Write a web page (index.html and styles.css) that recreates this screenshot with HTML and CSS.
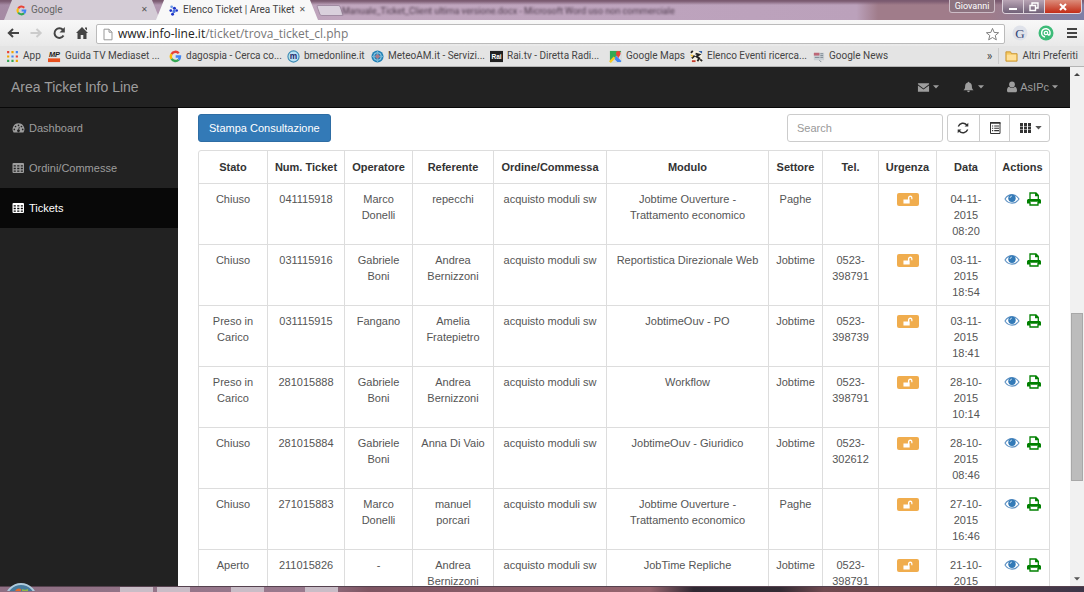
FILE: index.html
```
<!DOCTYPE html>
<html lang="it">
<head>
<meta charset="utf-8">
<title>Elenco Ticket | Area Tiket</title>
<link rel="stylesheet" href="styles.css">
</head>
<body>
<svg class="sprite" aria-hidden="true">
  <symbol id="google" viewBox="0 0 16 16"><g fill="none" stroke-width="3"><path d="M3.2 5A5.5 5.5 0 0 1 12 4" stroke="#e94235"/><path d="M3.2 11A5.5 5.5 0 0 1 3.2 5" stroke="#fbbc05"/><path d="M11.8 12A5.5 5.5 0 0 1 3.2 11" stroke="#34a853"/><path d="M8.2 8H13.5A5.5 5.5 0 0 1 11.8 12" stroke="#4285f4"/></g></symbol>
  <symbol id="caret" viewBox="0 0 8 5"><path d="M0 0h8L4 4.5z" fill="currentColor"/></symbol>
  <symbol id="table" viewBox="0 0 13 12"><path fill="currentColor" fill-rule="evenodd" d="M1.500 1h9.500a1 1 0 0 1 1 1v8a1 1 0 0 1-1 1h-9.500a1 1 0 0 1-1-1V2a1 1 0 0 1 1-1zM1.700 3.200v1.400h2.100V3.200zM5.200 3.200v1.400h2.200V3.200zM8.800 3.200v1.400h2.100V3.200zM1.700 5.800v1.400h2.100V5.800zM5.200 5.800v1.400h2.200V5.800zM8.800 5.800v1.400h2.100V5.800zM1.700 8.400v1.400h2.100V8.400zM5.200 8.400v1.400h2.200V8.400zM8.800 8.400v1.400h2.100V8.400z"/></symbol>
  <symbol id="gauge" viewBox="0 0 14 12"><path fill="currentColor" fill-rule="evenodd" d="M7 1a6.3 6.3 0 0 0-5.3 9.8h10.6A6.3 6.3 0 0 0 7 1zM7 2.2a.9.9 0 1 1 0 1.8.9.9 0 0 1 0-1.8zM3.8 3.5a.9.9 0 1 1 0 1.8.9.9 0 0 1 0-1.8zM10.2 3.5a.9.9 0 1 1 0 1.8.9.9 0 0 1 0-1.8zM2.5 6.6a.9.9 0 1 1 0 1.8.9.9 0 0 1 0-1.8zM11.5 6.6a.9.9 0 1 1 0 1.8.9.9 0 0 1 0-1.8zM7.5 4.6l.8.2-.6 2.9a1.4 1.4 0 1 1-.9-.2z"/></symbol>
  <symbol id="unlock" viewBox="0 0 12 10"><path fill="#fff" d="M1.500 5h5V3.400C6.500 1.600 7.700.6 9.100.6s2.400 1 2.400 2.500v1.700h-1.300V3.300c0-.7-.4-1.200-1.100-1.200s-1.100.5-1.100 1.300V5h.4v4.500H1.500z"/></symbol>
  <symbol id="eye" viewBox="0 0 16 14"><path d="M1 7C4.500 1.200 11.500 1.200 15 7 11.500 12.500 4.500 12.500 1 7z" fill="#fff" stroke="#5b8fc2" stroke-width="1.100"/><circle cx="8" cy="6.300" r="3.700" fill="#337ab7"/><path d="M6 6A2.200 2.200 0 0 1 8 4" fill="none" stroke="#dbe8f4" stroke-width=".8"/></symbol>
  <symbol id="print" viewBox="0 0 16 14"><path d="M4 7.500V1h6l2.300 2.300v4.200M9.700 1.200v2.400h2.500" fill="none" stroke="#008000" stroke-width="1.300"/><path d="M2.700 7h10.600c1 0 1.700.7 1.700 1.600v3h-3V9.700H4v1.900H1v-3C1 7.700 1.700 7 2.700 7z" fill="#008000"/><path d="M4 10v3h8v-3" fill="none" stroke="#008000" stroke-width="1.300"/></symbol>
</svg>

<header class="browser">
  <div class="titlebar">
    <div class="tabs">
      <div class="tab tab-idle"><svg class="fav"><use href="#google"/></svg><span>Google</span><button class="tab-close" aria-label="Chiudi Google">✕</button></div>
      <div class="tab tab-active"><svg class="fav" viewBox="0 0 12 12"><g fill="#1d35c8"><circle cx="4" cy="2" r="1.500" fill="#6d9ae8"/><circle cx="7" cy="3.500" r="1.700"/><circle cx="3" cy="6" r="1.500"/><circle cx="6.500" cy="7" r="1.700" fill="#4c78e0"/><circle cx="9.500" cy="6" r="1.400"/><circle cx="5" cy="10" r="1.600"/></g></svg><span>Elenco Ticket | Area Tiket</span><button class="tab-close" aria-label="Chiudi Elenco Ticket">✕</button></div>
      <button class="new-tab" aria-label="Nuova scheda"></button>
    </div>
    <div class="behind">Manuale_Ticket_Client ultima versione.docx - Microsoft Word uso non commerciale</div>
    <div class="window-controls">
      <button class="profile">Giovanni</button>
      <div class="window-buttons">
        <button aria-label="Riduci"><svg viewBox="0 0 12 10"><path d="M2 6h8v2H2z" fill="#fff"/></svg></button>
        <button aria-label="Ripristina"><svg viewBox="0 0 12 10"><path d="M4 3V1h6v5H8M2 3.500h5.500v5H2z" fill="none" stroke="#fff" stroke-width="1.400"/></svg></button>
        <button class="window-close" aria-label="Chiudi"><svg viewBox="0 0 12 10"><path d="M3 2l6 6M9 2L3 8" stroke="#fff" stroke-width="2"/></svg></button>
      </div>
    </div>
  </div>
  <div class="toolbar">
    <div class="nav">
      <button aria-label="Indietro"><svg viewBox="0 0 14 14"><path d="M13 7H2.500M7 3L2.800 7 7 11" fill="none" stroke="#444" stroke-width="2"/></svg></button>
      <button aria-label="Avanti"><svg viewBox="0 0 14 14"><path d="M1.500 7H12M7.500 3l4.200 4-4.200 4" fill="none" stroke="#ccc" stroke-width="2"/></svg></button>
      <button aria-label="Ricarica"><svg viewBox="0 0 14 14"><path d="M11.500 9.500A4.800 4.800 0 1 1 11 4" fill="none" stroke="#444" stroke-width="2"/><path d="M12.800 1v5.500H7.500z" fill="#444"/></svg></button>
      <button aria-label="Pagina iniziale"><svg viewBox="0 0 14 14"><path d="M7 1l6 6h-1.500v6H8.300V9H5.700v4H2.500V7H1l6-6zM10 1.500h2v3l-2-2z" fill="#444"/></svg></button>
    </div>
    <div class="address">
      <svg viewBox="0 0 10 12"><path d="M1 .7h5l3 3v7.600H1zM6 .7v3h3" fill="#fff" stroke="#999"/></svg>
      <div class="url">www.info-line.it<span>/ticket/trova_ticket_cl.php</span></div>
      <button aria-label="Preferiti"><svg viewBox="0 0 16 16"><path d="M8 1.500l1.800 4.300 4.700.3-3.600 3 1.200 4.600L8 11.200l-4.100 2.500 1.200-4.600-3.600-3 4.700-.3z" fill="#fff" stroke="#777"/></svg></button>
    </div>
    <div class="extensions">
      <button aria-label="Estensione G"><svg viewBox="0 0 16 16"><circle cx="8" cy="8" r="7.500" fill="#dfe2ea"/><text class="ext-letter" x="8" y="12.500">G</text></svg></button>
      <button aria-label="Estensione verde"><svg viewBox="0 0 16 16"><circle cx="8" cy="8" r="7.500" fill="#3dbb78"/><path d="M7 12A4.200 4.200 0 1 1 12 8.500c0 2-2 2-2 .5" fill="none" stroke="#fff" stroke-width="1.500"/><circle cx="8" cy="8" r="1.700" fill="none" stroke="#fff" stroke-width="1.300"/></svg></button>
      <button aria-label="Menu"><svg viewBox="0 0 16 16"><path d="M3 4h10M3 8h10M3 12h10" stroke="#444" stroke-width="2"/></svg></button>
    </div>
  </div>
  <nav class="bookmarks" aria-label="Preferiti">
    <a href="#"><svg viewBox="0 0 12 12"><path d="M1 1h2v2H1zM9 5h2v2H9z" fill="#e94235"/><path d="M5 1h2v2H5zM1 5h2v2H1zM9 9h2v2H9z" fill="#f0a500"/><path d="M9 1h2v2H9zM5 5h2v2H5z" fill="#4285f4"/><path d="M1 9h2v2H1zM5 9h2v2H5z" fill="#34a853"/></svg>App</a>
    <a href="#"><svg viewBox="0 0 14 14"><text class="mp-text" x="7" y="8">MP</text><path d="M0 9h13v4H0z" fill="#e8501e"/></svg>Guida TV Mediaset ...</a>
    <a href="#"><svg><use href="#google"/></svg>dagospia - Cerca co...</a>
    <a href="#"><svg viewBox="0 0 14 14"><circle cx="7" cy="7" r="6" fill="#b9e1f5" stroke="#3b8ab3" stroke-width="1.200"/><text class="m-text" x="7" y="10">m</text></svg>bmedonline.it</a>
    <a href="#"><svg viewBox="0 0 14 14"><circle cx="7" cy="7" r="6.500" fill="#2583b7"/><circle cx="7" cy="7" r="4.200" fill="none" stroke="#a8d7ed"/><path d="M1 7h12M7 1v12" stroke="#75b5d4"/><circle cx="7" cy="7" r="2.300" fill="#a77988"/></svg>MeteoAM.it - Servizi...</a>
    <a href="#"><svg viewBox="0 0 14 14"><path d="M0 1h14v12H0z" fill="#222"/><text class="rai-text" x="7" y="10">Rai</text></svg>Rai.tv - Diretta Radi...</a>
    <a href="#"><svg viewBox="0 0 14 14"><path d="M1 1h12v12H1z" fill="#34a853"/><path d="M1 13L13 2v11z" fill="#d8dce4"/><path d="M5 9l3-2.500 5 5V13H9z" fill="#4285f4"/><path d="M1 13l5-5" stroke="#fbcb20" stroke-width="2.500"/><path d="M10 9C9 6.500 7.500 5.500 7.500 3.500a2.500 2.500 0 0 1 5 0C12.500 5.500 11 6.500 10 9z" fill="#e94235"/></svg>Google Maps</a>
    <a href="#"><svg viewBox="0 0 14 14"><path d="M1 1h12v12H1z" fill="#f8f3e5"/><path d="M1 3l2-2M6 4l4 1-3 2 3 2-2 3M11 10l2 2M2 9l3-3" fill="none" stroke="#252525" stroke-width="2"/><path d="M9 1h4v3z" fill="#3865a8"/><path d="M0 5h3v3z" fill="#f0bb23"/><path d="M2 11h4v2H2z" fill="#c33c2c"/></svg>Elenco Eventi ricerca...</a>
    <a href="#"><svg viewBox="0 0 14 14"><path d="M2 3h11v8H2z" fill="#c9d0d5"/><path d="M2 3h6v3H2z" fill="#bd6777"/><path d="M9 4h3M9 6h3M3 8h5M9 8h3M8 11l2 2" stroke="#7c8791"/></svg>Google News</a>
    <button class="more" aria-label="Altri segnalibri">»</button>
    <a class="other" href="#"><svg viewBox="0 0 14 14"><path d="M1 2h5l1 2h6v8H1z" fill="#f6c95f" stroke="#c99330"/><path d="M2 5h10v6H2z" fill="#ffe09a"/></svg>Altri Preferiti</a>
  </nav>
</header>

<div class="viewport">
  <div class="app">
    <header class="app-header">
      <a class="brand" href="#">Area Ticket Info Line</a>
      <div class="user-menu">
        <button aria-label="Messaggi"><svg class="icon" viewBox="0 0 14 12"><path d="M1 2h12v1L7 7.500 1 3zM1 4.300l6 4.500 6-4.500V11H1z" fill="currentColor"/></svg><svg class="caret"><use href="#caret"/></svg></button>
        <button aria-label="Notifiche"><svg class="icon" viewBox="0 0 14 14"><path d="M7 .8c.6 0 .9.400.8.900 2 .4 3.100 2 3.100 3.800 0 3 .7 4.400 2 5.300H1.100c1.300-.9 2-2.300 2-5.300 0-1.800 1.100-3.400 3.100-3.800C6.100 1.200 6.400.8 7 .8zM5.400 11.400h3.200a1.600 1.600 0 0 1-3.200 0z" fill="currentColor"/></svg><svg class="caret"><use href="#caret"/></svg></button>
        <button><svg class="icon icon-user" viewBox="0 0 10 12"><circle cx="5" cy="3.500" r="2.900" fill="currentColor"/><path d="M2 5.800c2 1.600 4 1.600 6 0 1.500.5 2 2 2 4 0 .9-.6 1.500-1.500 1.500h-7C.6 11.300 0 10.700 0 9.800c0-2 .5-3.500 2-4z" fill="currentColor"/></svg>AsIPc<svg class="caret"><use href="#caret"/></svg></button>
      </div>
    </header>
    <div class="app-body">
      <nav class="sidebar">
        <a href="#"><svg><use href="#gauge"/></svg>Dashboard</a>
        <a href="#"><svg><use href="#table"/></svg>Ordini/Commesse</a>
        <a class="current" href="#"><svg><use href="#table"/></svg>Tickets</a>
      </nav>
      <main class="content">
        <div class="actions-bar">
          <button class="primary">Stampa Consultazione</button>
          <div class="tools">
            <input class="search" type="text" placeholder="Search" aria-label="Search">
            <div class="group">
              <button aria-label="Aggiorna"><svg viewBox="0 0 14 14"><path d="M2.300 5.500A5 5 0 0 1 10.800 4M11.700 8.500A5 5 0 0 1 3.200 10" fill="none" stroke="#333" stroke-width="1.400"/><path d="M12.300 1.800v3.700H8.600zM1.700 12.200V8.500h3.700z" fill="#333"/></svg></button>
              <button aria-label="Vista elenco"><svg viewBox="0 0 14 14"><path d="M2.500 1.500h9.500v11H2.500z" fill="none" stroke="#333"/><path d="M2 2h10.500" stroke="#333" stroke-width="1.500"/><path d="M4 5h1.200M6.200 5H11M4 7.300h1.200M6.200 7.300H11M4 9.600h1.200M6.200 9.600H11" stroke="#333" stroke-width="1.100"/></svg></button>
              <button aria-label="Colonne"><svg viewBox="0 0 14 14"><path d="M2 2h3v3H2zM6 2h3v3H6zM10 2h3v3h-3zM2 5.500h3v3H2zM6 5.500h3v3H6zM10 5.500h3v3h-3zM2 9h3v3H2zM6 9h3v3H6zM10 9h3v3h-3z" fill="#333"/></svg><svg class="caret"><use href="#caret"/></svg></button>
            </div>
          </div>
        </div>
        <table class="tickets">
          <colgroup><col class="c-state"><col class="c-num"><col class="c-oper"><col class="c-ref"><col class="c-order"><col class="c-module"><col class="c-sector"><col class="c-tel"><col class="c-urgency"><col class="c-date"><col class="c-actions"></colgroup>
          <thead><tr><th>Stato</th><th>Num. Ticket</th><th>Operatore</th><th>Referente</th><th>Ordine/Commessa</th><th>Modulo</th><th>Settore</th><th>Tel.</th><th>Urgenza</th><th>Data</th><th>Actions</th></tr></thead>
          <tbody>
            <tr><td>Chiuso</td><td>041115918</td><td>Marco Donelli</td><td>repecchi</td><td>acquisto moduli sw</td><td>Jobtime Ouverture -<br>Trattamento economico</td><td>Paghe</td><td></td><td><span class="badge"><svg><use href="#unlock"/></svg></span></td><td>04-11-<br>2015<br>08:20</td><td><div class="row-actions"><a href="#" aria-label="Vedi"><svg><use href="#eye"/></svg></a><a href="#" aria-label="Stampa"><svg><use href="#print"/></svg></a></div></td></tr>
            <tr><td>Chiuso</td><td>031115916</td><td>Gabriele Boni</td><td>Andrea Bernizzoni</td><td>acquisto moduli sw</td><td>Reportistica Direzionale Web</td><td>Jobtime</td><td>0523-<br>398791</td><td><span class="badge"><svg><use href="#unlock"/></svg></span></td><td>03-11-<br>2015<br>18:54</td><td><div class="row-actions"><a href="#" aria-label="Vedi"><svg><use href="#eye"/></svg></a><a href="#" aria-label="Stampa"><svg><use href="#print"/></svg></a></div></td></tr>
            <tr><td>Preso in Carico</td><td>031115915</td><td>Fangano</td><td>Amelia Fratepietro</td><td>acquisto moduli sw</td><td>JobtimeOuv - PO</td><td>Jobtime</td><td>0523-<br>398739</td><td><span class="badge"><svg><use href="#unlock"/></svg></span></td><td>03-11-<br>2015<br>18:41</td><td><div class="row-actions"><a href="#" aria-label="Vedi"><svg><use href="#eye"/></svg></a><a href="#" aria-label="Stampa"><svg><use href="#print"/></svg></a></div></td></tr>
            <tr><td>Preso in Carico</td><td>281015888</td><td>Gabriele Boni</td><td>Andrea Bernizzoni</td><td>acquisto moduli sw</td><td>Workflow</td><td>Jobtime</td><td>0523-<br>398791</td><td><span class="badge"><svg><use href="#unlock"/></svg></span></td><td>28-10-<br>2015<br>10:14</td><td><div class="row-actions"><a href="#" aria-label="Vedi"><svg><use href="#eye"/></svg></a><a href="#" aria-label="Stampa"><svg><use href="#print"/></svg></a></div></td></tr>
            <tr><td>Chiuso</td><td>281015884</td><td>Gabriele Boni</td><td>Anna Di Vaio</td><td>acquisto moduli sw</td><td>JobtimeOuv - Giuridico</td><td>Jobtime</td><td>0523-<br>302612</td><td><span class="badge"><svg><use href="#unlock"/></svg></span></td><td>28-10-<br>2015<br>08:46</td><td><div class="row-actions"><a href="#" aria-label="Vedi"><svg><use href="#eye"/></svg></a><a href="#" aria-label="Stampa"><svg><use href="#print"/></svg></a></div></td></tr>
            <tr><td>Chiuso</td><td>271015883</td><td>Marco Donelli</td><td>manuel porcari</td><td>acquisto moduli sw</td><td>Jobtime Ouverture -<br>Trattamento economico</td><td>Paghe</td><td></td><td><span class="badge"><svg><use href="#unlock"/></svg></span></td><td>27-10-<br>2015<br>16:46</td><td><div class="row-actions"><a href="#" aria-label="Vedi"><svg><use href="#eye"/></svg></a><a href="#" aria-label="Stampa"><svg><use href="#print"/></svg></a></div></td></tr>
            <tr><td>Aperto</td><td>211015826</td><td>-</td><td>Andrea Bernizzoni</td><td>acquisto moduli sw</td><td>JobTime Repliche</td><td>Jobtime</td><td>0523-<br>398791</td><td><span class="badge"><svg><use href="#unlock"/></svg></span></td><td>21-10-<br>2015</td><td><div class="row-actions"><a href="#" aria-label="Vedi"><svg><use href="#eye"/></svg></a><a href="#" aria-label="Stampa"><svg><use href="#print"/></svg></a></div></td></tr>
          </tbody>
        </table>
      </main>
    </div>
  </div>
  <div class="scrollbar" aria-hidden="true">
    <svg viewBox="0 0 8 5"><path d="M0 5h8L4 1z" fill="#444"/></svg>
    <div class="track"><div class="thumb"></div></div>
    <svg><use href="#caret"/></svg>
  </div>
</div>
<footer class="taskbar">
  <svg class="start" viewBox="0 0 32 8"><circle cx="16" cy="16" r="15" fill="#477b9d" stroke="#aecbdc" stroke-width="2"/><path d="M10 8c2-3 4-3 6-2v2z" fill="#e46a2d"/><path d="M17 6c2 1 4 1 6 0v2h-6z" fill="#91b847"/></svg>
  <div class="tasks"><span></span><span></span><span class="flat"></span><span></span><span class="flat"></span><span></span></div>
</footer>
</body>
</html>
```

FILE: styles.css
```
* { box-sizing: border-box; }
body {
  margin: 0;
  height: 100vh;
  display: flex;
  flex-direction: column;
  overflow: hidden;
  font-family: "Liberation Sans", Arial, sans-serif;
  font-size: 11px;
  line-height: 16px;
  color: #555;
  background: #fff;
}
button { font: inherit; color: inherit; background: none; border: 0; padding: 0; }
a { color: inherit; text-decoration: none; }
svg { display: block; flex: none; }
.sprite { position: absolute; width: 0; height: 0; }

/* Browser frame */
.browser { flex: none; font-family: Roboto, "Open Sans", sans-serif; color: #444; font-size: 10px; }
.titlebar {
  display: flex;
  height: 20px;
  background: linear-gradient(#7a5a70 0, #7a5a70 1px, transparent 5px), linear-gradient(90deg, #a58aa4, #c0a6be 32%, #bda3bd 60%, #bba1bb 79%, #a07c8a 81%, #a07c8a 91%, #7d7fa6);
}
.tabs { display: flex; padding-left: 4px; }
.tab { display: flex; align-items: center; gap: 4px; height: 20px; padding: 0 12px; clip-path: polygon(0 100%, 8px 0, calc(100% - 8px) 0, 100% 100%); }
.tab span { flex: 1; white-space: nowrap; overflow: hidden; }
.tab-idle { width: 156px; color: #666; background: #d4ccd6; }
.tab-active { width: 162px; margin-left: -4px; background: #f8f8f8; }
.fav { width: 11px; height: 11px; }
.tab-close { font-size: 8px; color: #555; }
.new-tab { width: 24px; height: 11px; margin: 5px 0 0; background: #d9d0dc; border: 1px solid #a18ca3; border-radius: 2px; transform: skewX(20deg); }
.behind { flex: 1; overflow: hidden; white-space: nowrap; font-size: 9px; line-height: 22px; color: #4d3a4c; filter: blur(1px); }
.window-controls { display: flex; align-items: flex-start; gap: 7px; padding-right: 2px; }
.profile { width: 46px; height: 13px; font-size: 9px; line-height: 11px; color: #fff; background: #8d7380; border: 1px solid #cdbcc6; border-top: 0; border-radius: 0 0 3px 3px; }
.window-buttons { display: flex; width: 80px; height: 14px; border: 1px solid #ddd3dc; border-top: 0; border-radius: 0 0 4px 4px; overflow: hidden; }
.window-buttons button { flex: 1; display: flex; justify-content: center; align-items: center; background: linear-gradient(#b9a5b5, #716178); border-right: 1px solid #ddd3dc; }
.window-buttons .window-close { flex: 0 0 36px; background: linear-gradient(#dc8d7c, #c32c16); border: 0; }
.window-buttons svg { width: 12px; height: 10px; }
.toolbar { display: flex; align-items: center; gap: 7px; height: 26px; padding: 0 4px 0 6px; background: linear-gradient(#f8f8f8, #e9e9e9); }
.nav { display: flex; gap: 9px; }
.nav svg { width: 14px; height: 14px; }
.address { flex: 1; display: flex; align-items: center; gap: 5px; height: 20px; margin-top: 2px; padding: 0 4px 0 6px; background: #fff; border: 1px solid #bbb; border-radius: 2px; }
.address > svg { width: 10px; height: 13px; }
.address button svg { width: 15px; height: 15px; }
.url { flex: 1; font-family: "Open Sans", sans-serif; font-size: 12px; color: #222; }
.url span { color: #777; }
.extensions { display: flex; gap: 10px; }
.extensions svg { width: 16px; height: 16px; }
.ext-letter { font: 13px "Liberation Serif", serif; text-anchor: middle; fill: #334477; }
.bookmarks {
  display: grid;
  grid-template-columns: 42px 121px 118px 84px 119px 119px 81px 122px 1fr auto auto;
  align-items: center;
  height: 21px;
  padding: 0 6px;
  background: #e4e4e4;
  border-bottom: 1px solid #b5b5b5;
}
.bookmarks a { display: flex; align-items: center; gap: 4px; white-space: nowrap; }
.bookmarks svg { width: 13px; height: 13px; }
.mp-text { font: italic bold 8px "Liberation Sans", sans-serif; text-anchor: middle; fill: #222; }
.m-text { font: bold 9px "Liberation Sans", sans-serif; text-anchor: middle; fill: #26286a; }
.rai-text { font: bold 7px "Liberation Sans", sans-serif; text-anchor: middle; fill: #fff; }
.more { padding-right: 6px; font-size: 12px; }
.bookmarks .other { padding-left: 6px; border-left: 1px solid #ccc; }

/* Page */
.viewport { flex: 1; min-height: 0; display: flex; }
.app { flex: 1; min-width: 0; display: flex; flex-direction: column; }
.app-header { flex: none; display: flex; align-items: center; justify-content: space-between; height: 41px; padding: 0 12px 0 11px; background: #222; border-bottom: 1px solid #080808; color: #9d9d9d; }
.brand { font-size: 14px; }
.user-menu { display: flex; gap: 23px; }
.user-menu button { display: flex; align-items: center; gap: 3px; }
.icon { width: 13px; height: 12px; }
.icon-user { width: 10px; }
.caret { width: 6px; height: 4px; }
.app-body { flex: 1; min-height: 0; display: flex; }
.sidebar { flex: none; width: 178px; background: #222; color: #9d9d9d; }
.sidebar a { display: flex; align-items: center; gap: 4px; height: 40px; padding-left: 12px; }
.sidebar svg { width: 13px; height: 12px; }
.sidebar .current { color: #fff; background: #080808; }
.content { flex: 1; min-width: 0; padding: 6px 20px 0; overflow: hidden; }
.actions-bar { display: flex; justify-content: space-between; margin-bottom: 8px; }
.primary { height: 28px; padding: 0 10px; color: #fff; background: #337ab7; border: 1px solid #2e6da4; border-radius: 3px; }
.tools { display: flex; gap: 4px; }
.search { width: 156px; height: 28px; padding: 0 9px; font: inherit; border: 1px solid #ccc; border-radius: 3px; }
.search::placeholder { color: #999; }
.group { display: flex; width: 103px; border: 1px solid #ccc; border-radius: 3px; }
.group button { flex: 1 1 31px; display: flex; align-items: center; justify-content: center; gap: 3px; }
.group button:last-child { flex-basis: 40px; }
.group button + button { border-left: 1px solid #ccc; }
.group svg { width: 14px; height: 14px; }
.group .caret { width: 7px; height: 4px; }
.tickets { width: 100%; table-layout: fixed; border-spacing: 0; border: 1px solid #ddd; border-radius: 3px; text-align: center; }
.tickets th { padding: 8px 0; color: #333; border-bottom: 1px solid #ddd; white-space: nowrap; }
.tickets td { padding: 7px 6px 5px; height: 61px; vertical-align: top; border-bottom: 1px solid #ddd; }
.tickets th + th, .tickets td + td { border-left: 1px solid #ddd; }
.c-state { width: 68px; }
.c-num { width: 77px; }
.c-oper { width: 68px; }
.c-ref { width: 81px; }
.c-order { width: 113px; }
.c-module { width: 162px; }
.c-sector { width: 54px; }
.c-tel { width: 56px; }
.c-urgency { width: 58px; }
.c-date { width: 59px; }
.c-actions { width: 54px; }
.tickets td:nth-child(n+5) { padding-left: 2px; padding-right: 2px; }
.badge { display: inline-flex; align-items: center; justify-content: center; width: 22px; height: 13px; margin-top: 2px; background: #f0ad4e; border-radius: 2px; }
.badge svg { width: 11px; height: 9px; }
.row-actions { display: flex; justify-content: center; align-items: center; gap: 6px; height: 16px; }
.row-actions svg { width: 16px; height: 14px; }
.scrollbar { flex: none; width: 14px; display: flex; flex-direction: column; align-items: center; padding: 5px 0; background: #f1f1f1; }
.scrollbar svg { width: 6px; height: 4px; }
.track { flex: 1; width: 12px; display: grid; grid-template-rows: 237fr 168fr 96fr; }
.thumb { grid-row: 2; background: #bcbcbc; border: 1px solid #a8a8a8; }

/* Taskbar */
.taskbar { flex: none; display: flex; height: 6px; background: linear-gradient(90deg, #8e6f83, #9a7a8e 28%, #7e5562 34%, #96656f 60%, #302832 64%, #342b34 72%, #704a50 76%, #6b454a 85%, #3c3548); border-top: 1px solid #55414e; }
.start { width: 32px; height: 8px; margin: -4px 0 0 5px; }
.tasks { display: flex; gap: 4px; padding-left: 83px; }
.tasks span { width: 33px; background: #c9bdc7; }
.tasks .flat { background: none; }
```
